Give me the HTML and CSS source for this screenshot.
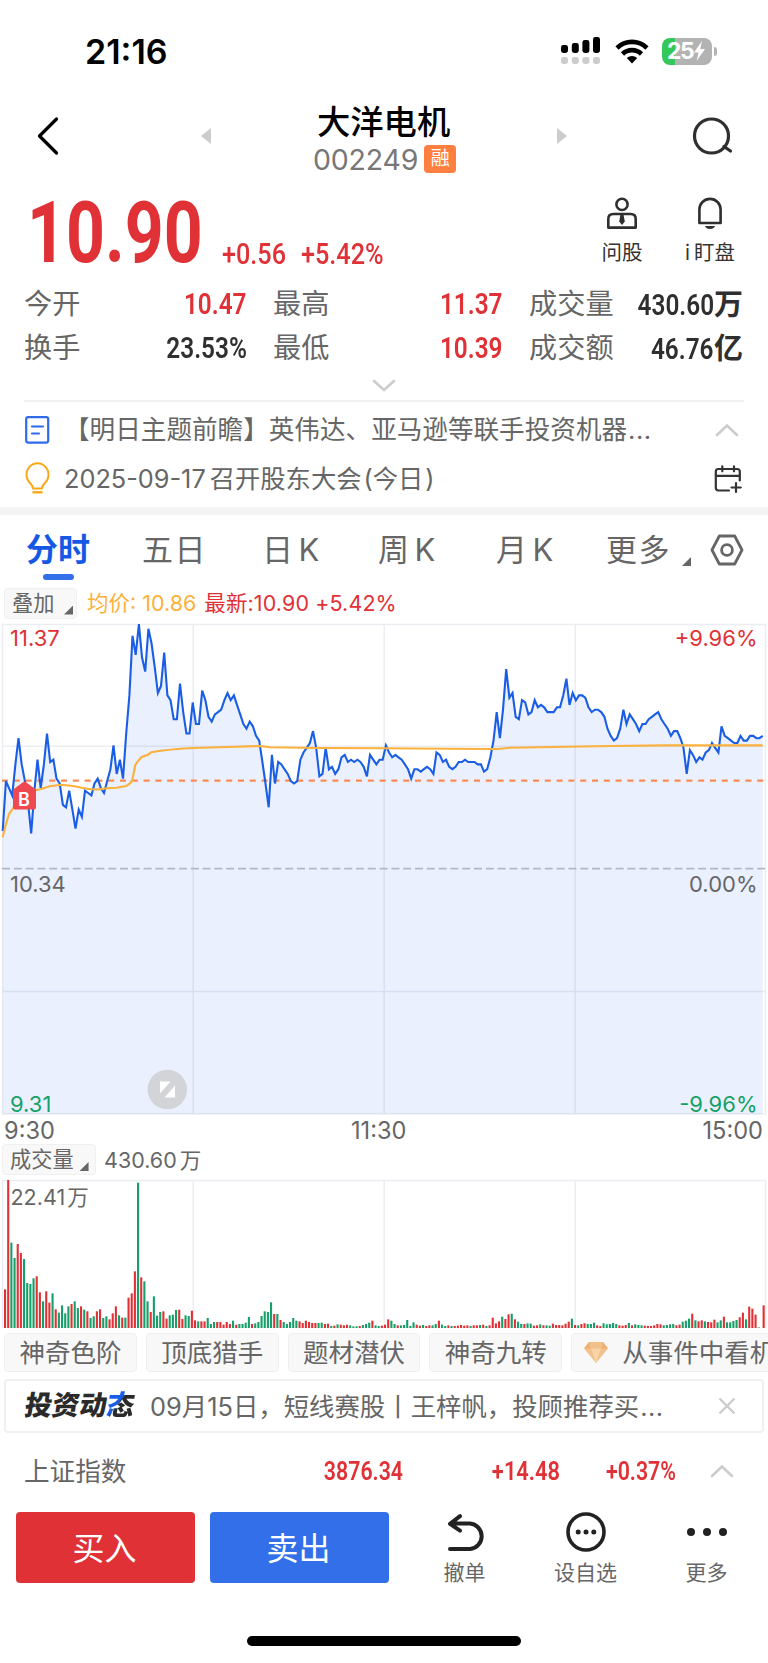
FILE: index.html
```html
<!DOCTYPE html>
<html lang="zh-CN">
  <head>
    <meta charset="UTF-8" />
    <meta name="viewport" content="width=device-width, initial-scale=1.0" />
    <title>大洋电机 002249</title>
    <link rel="stylesheet" href="styles.css">
  </head>
  <body>
    <div class="status-bar">
      <span class="status-time">21:16</span>
      <svg class="signal" width="40" height="28" viewBox="0 0 40 28">
        <g fill="#000">
          <rect x="0" y="8" width="7" height="8" rx="2.4" />
          <rect x="10.8" y="6" width="7" height="10" rx="2.4" />
          <rect x="21.4" y="3" width="7" height="13" rx="2.4" />
          <rect x="32" y="0" width="7" height="16" rx="2.4" />
        </g>
        <g fill="#ccc">
          <rect x="0" y="20" width="7" height="7" rx="2.4" />
          <rect x="10.8" y="20" width="7" height="7" rx="2.4" />
          <rect x="21.4" y="20" width="7" height="7" rx="2.4" />
          <rect x="32" y="20" width="7" height="7" rx="2.4" />
        </g>
      </svg>
      <svg class="wifi" width="34" height="25" viewBox="0 0 34 25">
        <g fill="none" stroke="#000" stroke-width="4.6">
          <path d="M2 9 A21.5 21.5 0 0 1 32 9" />
          <path d="M7.5 15 A13.6 13.6 0 0 1 26.5 15" />
        </g>
        <path d="M17 24.5 L11.8 19 A7.6 7.6 0 0 1 22.2 19 Z" />
      </svg>
      <div class="battery">
        <span>25</span>
        <svg width="11" height="20" viewBox="0 0 11 20"><path d="M8 0 L0 11.5 H4.6 L2.6 20 L11 8 H6.2 Z" fill="#fff" /></svg>
      </div>
    </div>

    <header class="header">
      <svg class="back" width="22" height="38" viewBox="0 0 22 38"><path d="M19.5 2 L2.5 19 L19.5 36" fill="none" stroke="#000" stroke-width="3.2" stroke-linecap="round" stroke-linejoin="round" /></svg>
      <svg class="prev" width="10" height="16" viewBox="0 0 10 16"><path d="M10 0 V16 L0 8 Z" fill="#ccc" /></svg>
      <div class="stock">
        <h1 class="stock-name">大洋电机</h1>
        <div class="stock-code">
          <span>002249</span>
          <span class="badge">融</span>
        </div>
      </div>
      <svg class="next" width="10" height="16" viewBox="0 0 10 16"><path d="M0 0 V16 L10 8 Z" fill="#ccc" /></svg>
      <svg class="search" width="42" height="38" viewBox="0 0 42 38"><g fill="none" stroke="#2f2f2f" stroke-width="3.2" stroke-linecap="round"><circle cx="19.5" cy="19" r="17" /><path d="M32 29.5 L38.5 34" /></g></svg>
    </header>

    <section class="quote">
      <span class="price din">10.90</span>
      <span class="change change-value din">+0.56</span>
      <span class="change din">+5.42%</span>
      <div class="tool tool-ask">
        <svg width="32" height="32" viewBox="0 0 32 32">
          <g fill="none" stroke="#2f2f2f" stroke-width="2.6">
            <circle cx="16" cy="7.4" r="5.6" />
            <path d="M2.3 30.6 V22 Q2.3 17 7.3 17 H24.7 Q29.7 17 29.7 22 V30.6 Z" stroke-linejoin="round" />
          </g>
          <path d="M14.4 18 H17.6 L18.8 24.5 L16 28 L13.2 24.5 Z" fill="#2f2f2f" />
        </svg>
        <span>问股</span>
      </div>
      <div class="tool tool-watch">
        <svg width="28" height="32" viewBox="0 0 28 32">
          <path d="M3.4 26 V12.5 A10.6 10.6 0 0 1 24.6 12.5 V26 Z" fill="none" stroke="#2f2f2f" stroke-width="2.6" stroke-linejoin="round" />
          <path d="M9 29 H19 Q18 32 14 32 Q10 32 9 29 Z" fill="#2f2f2f" />
        </svg>
        <span><i class="tool-i">i</i>盯盘</span>
      </div>
    </section>

    <section class="stats">
      <div class="stat"><span>今开</span><b class="din red">10.47</b></div>
      <div class="stat"><span>最高</span><b class="din red">11.37</b></div>
      <div class="stat"><span>成交量</span><b><i class="din">430.60</i>万</b></div>
      <div class="stat"><span>换手</span><b class="din">23.53%</b></div>
      <div class="stat"><span>最低</span><b class="din red">10.39</b></div>
      <div class="stat"><span>成交额</span><b><i class="din">46.76</i>亿</b></div>
    </section>
    <div class="expand">
      <svg width="24" height="14" viewBox="0 0 24 14"><path class="chevron" d="M2 2 L12 11 L22 2" /></svg>
    </div>

    <section class="news">
      <div class="news-row">
        <svg class="news-icon" width="25" height="28" viewBox="0 0 25 28"><g fill="none" stroke="#2f6be8" stroke-width="2.2"><rect x="1.2" y="1.2" width="22" height="25.4" rx="2" /><path d="M7 10.5 H18 M7 17.5 H14" stroke-linecap="round" /></g></svg>
        <p class="news-title">【明日主题前瞻】英伟达、亚马逊等联手投资机器<span class="dots">...</span></p>
        <svg width="24" height="14" viewBox="0 0 24 14"><path class="chevron" d="M2 12 L12 2.5 L22 12" /></svg>
      </div>
      <div class="news-row">
        <svg class="news-icon" width="25" height="30" viewBox="0 0 25 30"><g fill="none" stroke="#f9a816" stroke-width="2"><path d="M8 24.5 Q8 22 5.5 19.5 A11 11.4 0 1 1 19.5 19.5 Q17 22 17 24.5 Z" stroke-linejoin="round" /><path d="M7.5 28.3 H17.5" stroke-width="2.4" /></g></svg>
        <p class="notice"><span class="notice-date">2025-09-17</span>召开股东大会<span class="paren">(</span>今日<span class="paren">)</span></p>
        <svg class="calendar" width="28" height="28" viewBox="0 0 28 28"><g fill="none" stroke="#333" stroke-width="2.2" stroke-linecap="round"><path d="M15 25.5 H4.5 Q1.8 25.5 1.8 22.8 V6.5 Q1.8 4 4.5 4 H23 Q25.8 4 25.8 6.5 V15.5" /><path d="M2 10.8 H25.5 M8.3 1.3 V6.3 M20 1.3 V6.3 M22 18 V27 M17.5 22.5 H26.8" /></g></svg>
      </div>
    </section>

    <nav class="tabs">
      <span class="tab active">分时</span>
      <span class="tab">五日</span>
      <span class="tab tab-k">日K</span>
      <span class="tab tab-k">周K</span>
      <span class="tab tab-k tab-month">月K</span>
      <span class="tab tab-more">更多</span>
      <i class="corner"></i>
      <svg class="setting" width="34" height="32" viewBox="0 0 34 32"><g fill="none" stroke="#666" stroke-width="2.8" stroke-linejoin="round"><path d="M9.3 2 H24.7 L32 16 L24.7 30 H9.3 L2 16 Z" /><circle cx="17" cy="16" r="5.4" /></g></svg>
    </nav>

    <div class="chart-info">
      <span class="select">叠加<i class="corner"></i></span>
      <span class="avg">均价: 10.86</span>
      <span class="latest">最新:10.90 +5.42%</span>
    </div>

    <svg class="chart" width="768" height="491" viewBox="0 0 768 491">
      <path class="area" id="area" />
      <g class="grid">
        <path d="M2.5 0.5 H765.5 V490 H2.5 Z M193.2 0 V490 M384.2 0 V490 M575.2 0 V490 M2 122.2 H765 M2 367.5 H765" />
      </g>
      <path d="M2 244.6 H765" stroke="#b2b8c4" stroke-width="1.8" stroke-dasharray="8 3.8" />
      <path d="M2 156.6 H765" stroke="#fb8b55" stroke-width="2.2" stroke-dasharray="6 5.8" />
      <path class="line" id="line" />
      <path class="avg-line" d="M2.7 213.3 L5.7 201 L9 190 L12 186 L18.3 174.3 L28 167.7 L40.3 165.3 Q50 161.5 59.3 161 T81.7 163.7 T106.7 164.3 L116.7 163.7 L126 162 Q130.5 160 132.3 156 L135.3 141 L138.3 136.7 L141.7 133 L148 130.7 L151.3 128.3 Q165 125.6 193 124 L227 123 L260 122 L270 123.3 L317 124 L383 124.3 L450 124.7 L497 125 L510 123.8 L567 122.7 L610 122 L667 121.4 L762.7 121.4" />
      <path d="M24.5 159.5 L34 166.5 V183.5 H15 V166.5 Z" fill="#ee4850" stroke="#ee4850" stroke-width="4" stroke-linejoin="round" />
      <text class="mark" x="24" y="182">B</text>
      <g class="axis">
        <text class="up" x="10" y="22">11.37</text>
        <text class="up end" x="757.5" y="22">+9.96%</text>
        <text x="10" y="268">10.34</text>
        <text class="end" x="757.5" y="268">0.00%</text>
        <text class="down" x="10" y="487.5">9.31</text>
        <text class="down end" x="757.5" y="487.5">-9.96%</text>
      </g>
      <circle cx="167.3" cy="465.5" r="19.8" fill="#d3d4d7" />
      <path d="M160 457.5 H170.5 L160 469.5 Z M175 461.5 V473.5 H164.5 Z" fill="#fff" />
    </svg>
    <div class="times"><span>9:30</span><span>11:30</span><span>15:00</span></div>

    <div class="volume-info">
      <span class="select">成交量<i class="corner"></i></span>
      <span class="volume-value">430.60<em>万</em></span>
    </div>
    <svg class="volume" width="768" height="149" viewBox="0 0 768 149">
      <g class="grid"><path d="M2.5 148 V0.5 H765.5 V148 M193.2 0 V148 M384.2 0 V148 M575.2 0 V148" /></g>
      <g id="bars"></g>
      <text class="volume-max" x="10.5" y="24.5">22.41<tspan dx="2">万</tspan></text>
    </svg>

    <div class="chips">
      <span class="chip">神奇色阶</span>
      <span class="chip">顶底猎手</span>
      <span class="chip">题材潜伏</span>
      <span class="chip">神奇九转</span>
      <span class="chip chip-event">
        <svg width="24" height="21" viewBox="0 0 24 21"><path d="M5 0 H19 L24 6.5 L12 21 L0 6.5 Z" fill="#f3c08b" /><path d="M5 0 L7 6.5 H0 Z M19 0 L17 6.5 H24 Z" fill="#eeb074" /><path d="M7 6.5 H17 L12 21 Z" fill="#f8d3a8" /></svg>
        从事件中看机会
      </span>
    </div>

    <div class="feed">
      <span class="feed-logo">投资动<em>态</em></span>
      <span class="feed-text">09月15日，短线赛股丨王梓帆，投顾推荐买<span class="dots">...</span></span>
      <svg width="18" height="18" viewBox="0 0 18 18"><path d="M1.5 1.5 L16.5 16.5 M16.5 1.5 L1.5 16.5" stroke="#ccc" stroke-width="2.4" /></svg>
    </div>

    <div class="index">
      <span class="index-name">上证指数</span>
      <b class="din index-value">3876.34</b>
      <b class="din index-change">+14.48</b>
      <b class="din index-percent">+0.37%</b>
      <svg width="24" height="14" viewBox="0 0 24 14"><path class="chevron" d="M2 12 L12 2.5 L22 12" /></svg>
    </div>

    <footer class="actions">
      <button type="button" class="btn buy">买入</button>
      <button type="button" class="btn sell">卖出</button>
      <div class="action">
        <svg width="40" height="40" viewBox="0 0 40 40"><path d="M15 4.2 L5 11.8 L15 18.6 M5.5 11.5 H25 A12.8 12.8 0 0 1 25 37 H5" fill="none" stroke="#222" stroke-width="4" stroke-linecap="round" stroke-linejoin="round" /></svg>
        <span>撤单</span>
      </div>
      <div class="action">
        <svg width="40" height="40" viewBox="0 0 40 40"><circle cx="20" cy="20" r="18" fill="none" stroke="#222" stroke-width="3.6" /><g fill="#222"><circle cx="12.2" cy="20" r="2.5" /><circle cx="20" cy="20" r="2.5" /><circle cx="27.8" cy="20" r="2.5" /></g></svg>
        <span>设自选</span>
      </div>
      <div class="action">
        <svg width="40" height="40" viewBox="0 0 40 40"><g fill="#222"><circle cx="4" cy="20" r="4" /><circle cx="20" cy="20" r="4" /><circle cx="36" cy="20" r="4" /></g></svg>
        <span>更多</span>
      </div>
    </footer>
    <div class="home-bar"></div>

    <script src="chart.js"></script>
  </body>
</html>
```

FILE: styles.css
```css
* {
  box-sizing: border-box;
}
body {
  width: 768px;
  height: 1663px;
  margin: 0;
  overflow: hidden;
  background-color: #fff;
  color: #666;
  font-family: Inter, "Noto Sans CJK SC", sans-serif;
}
svg {
  display: block;
  flex-shrink: 0;
  overflow: visible;
}
span,
b {
  white-space: nowrap;
}
i,
em {
  font-style: normal;
}
/* 数字用窄体 */
.din {
  display: inline-block;
  font-family: Roboto, sans-serif;
  font-weight: 600;
  transform: scaleX(0.84);
  transform-origin: right center;
}
.red {
  color: #e03136;
}
.chevron {
  fill: none;
  stroke: #ccc;
  stroke-width: 2.6;
  stroke-linecap: round;
}
.corner {
  width: 9px;
  height: 9px;
  background-color: #666;
  clip-path: polygon(100% 0, 100% 100%, 0 100%);
}

.status-bar {
  display: flex;
  align-items: center;
  height: 102px;
  padding-left: 85px;
}
.status-time {
  width: 476px;
  color: #000;
  font-size: 34px;
  font-weight: 600;
  letter-spacing: 0;
}
.wifi {
  margin-left: 14px;
}
.battery {
  position: relative;
  display: flex;
  align-items: center;
  gap: 1px;
  width: 50px;
  height: 27px;
  margin-left: 13px;
  padding-left: 5px;
  border-radius: 8px;
  background: linear-gradient(90deg, #34c759 26%, #b3b3b3 26%);
  color: #fff;
  font-size: 23px;
  font-weight: 700;
  letter-spacing: -1.4px;
}
.battery::after {
  content: "";
  position: absolute;
  left: 52px;
  top: 9px;
  width: 3px;
  height: 9px;
  border-radius: 0 3px 3px 0;
  background-color: #b3b3b3;
}

.header {
  display: flex;
  align-items: center;
  height: 88px;
  padding: 0 34px 20px 37px;
}
.prev {
  margin-left: 142px;
}
.stock {
  width: 144px;
  height: 70px;
  margin-left: 102px;
}
.stock-name {
  margin: 0;
  padding-left: 4px;
  color: #000;
  font-size: 33.3px;
  font-weight: 500;
  line-height: 42px;
}
.stock-code {
  display: flex;
  align-items: center;
  gap: 6px;
  height: 28px;
  margin-top: 2px;
  font-size: 28.5px;
  color: #777;
  letter-spacing: -0.2px;
}
.badge {
  width: 32px;
  height: 28px;
  border-radius: 4px;
  background-color: #ff7f40;
  color: #fff;
  font-size: 19px;
  line-height: 27px;
  text-align: center;
}
.next {
  margin-left: 100px;
}
.search {
  margin-left: auto;
}

.quote {
  display: flex;
  height: 92px;
}
.price {
  flex-shrink: 0;
  width: 222px;
  padding-left: 27px;
  color: #e03136;
  font-size: 86px;
  line-height: 86px;
}
.quote .price {
  font-weight: 700;
  transform: scaleX(0.79);
  transform-origin: 27px center;
}
.change {
  width: 79px;
  padding-top: 47px;
  color: #e03136;
  font-size: 29px;
  line-height: 34px;
}
.quote .change {
  font-weight: 500;
  transform: scaleX(0.87);
  transform-origin: left center;
}
.tool {
  display: flex;
  flex-direction: column;
  align-items: center;
  width: 80px;
  padding-top: 7px;
  color: #333;
  font-size: 20.5px;
  line-height: 24px;
}
.tool span {
  margin-top: 12px;
}
.tool-ask {
  margin-left: auto;
}
.tool-watch {
  width: 96px;
  margin-right: 10px;
}
.tool-i {
  margin-right: 4px;
}

.stats {
  display: grid;
  grid-template-columns: 223px 230px 214px;
  column-gap: 26px;
  height: 88px;
  padding-left: 24px;
}
.stat {
  display: flex;
  justify-content: space-between;
  height: 44px;
  font-size: 28.2px;
  line-height: 45px;
}
.stat b {
  color: #2f2f2f;
  font-size: 29px;
  font-weight: 600;
}
.stat b.red {
  color: #e03136;
}
.expand {
  display: flex;
  justify-content: center;
  height: 32px;
  margin: 0 24px;
  padding-top: 9px;
  border-bottom: 2px solid #f1f1f1;
}

.news {
  height: 113px;
  padding: 3px 29px 0 25px;
  border-bottom: 8px solid #f4f4f4;
}
.news-row {
  display: flex;
  align-items: center;
  justify-content: space-between;
  height: 49px;
}
.news-title,
.notice {
  flex: 1;
  margin: 0 0 0 14px;
  font-size: 25.6px;
  line-height: 36px;
}
.notice {
  font-size: 25.3px;
}
.dots {
  margin-left: 1px;
  letter-spacing: 0.5px;
}
.notice-date {
  margin-right: 4px;
}
.paren {
  margin: 0 0 0 2px;
}
.calendar {
  margin-right: -3px;
}

.tabs {
  display: flex;
  height: 69px;
  padding: 12px 24px 0 26px;
  font-size: 31px;
  line-height: 46px;
}
.tab {
  width: 116px;
  letter-spacing: 1.6px;
}
.tab-k {
  padding-left: 4px;
  letter-spacing: 5.5px;
}
.tab-month {
  padding-left: 6px;
}
.tab.active {
  position: relative;
  color: #1658e6;
  font-weight: 600;
  font-size: 32px;
  letter-spacing: 0;
}
.tab.active::after {
  content: "";
  position: absolute;
  left: 17px;
  top: 47px;
  width: 31px;
  height: 6px;
  border-radius: 3px;
  background-color: #326fe8;
}
.tab-more {
  width: 66px;
}
.tabs .corner {
  margin: 30px 0 0 auto;
}
.setting {
  margin: 7px 0 0 19px;
}

.chart-info,
.volume-info {
  display: flex;
  align-items: center;
  height: 40px;
  padding-left: 4px;
  font-size: 21.5px;
}
.chart-info {
  padding-bottom: 2px;
}
.select {
  display: flex;
  align-items: flex-end;
  height: 31px;
  padding: 0 3px 3px 7px;
  border: 1px solid #f0f0f0;
  border-radius: 4px;
  background-color: #f8f8f8;
  font-size: 21.2px;
  line-height: 24px;
}
.chart-info .select {
  width: 73px;
  justify-content: space-between;
}
.avg,
.latest {
  padding-bottom: 4px;
}
.avg {
  margin-left: 10px;
  color: #fbb13c;
}
.latest {
  margin-left: 8px;
  color: #e03136;
  letter-spacing: 0.1px;
}

.grid path {
  fill: none;
  stroke: rgba(60, 80, 120, 0.1);
  stroke-width: 1.5;
}
.area {
  fill: #eaf0fe;
}
.line {
  fill: none;
  stroke: #1b5ee6;
  stroke-width: 2.1;
}
.avg-line {
  fill: none;
  stroke: #fbb13c;
  stroke-width: 2.1;
}
.mark {
  fill: #fff;
  font-size: 18px;
  font-weight: 600;
  text-anchor: middle;
}
.axis {
  fill: #666;
  font-size: 22px;
}
.axis .up {
  fill: #e03136;
}
.axis .down {
  fill: #16a069;
}
.axis .end {
  text-anchor: end;
}
.times {
  display: flex;
  justify-content: space-between;
  height: 29px;
  padding: 0 5px 0 4px;
  font-size: 23.6px;
  line-height: 31px;
}

.volume-info {
  height: 36px;
  padding: 0 0 5px 2px;
}
.volume-info .select {
  gap: 6px;
  width: 94px;
}
.volume-value {
  margin-left: 8px;
  padding-bottom: 2px;
}
.volume-value em {
  margin-left: 3px;
}
.volume-max {
  fill: #666;
  font-size: 21.5px;
}
.bar-r {
  fill: #e03136;
}
.bar-g {
  fill: #16a069;
}

.chips {
  display: flex;
  gap: 9px;
  height: 39px;
  margin: 4px 0 7px 4px;
  overflow: hidden;
}
.chip {
  flex-shrink: 0;
  width: 132.8px;
  border: 1px solid #efefef;
  border-radius: 4px;
  background-color: #f8f8f8;
  font-size: 25.5px;
  line-height: 38px;
  text-align: center;
}
.chip-event {
  display: flex;
  align-items: center;
  gap: 14px;
  width: 240px;
  padding-left: 12px;
}

.feed {
  display: flex;
  align-items: center;
  width: 760px;
  height: 54px;
  margin-left: 4px;
  padding: 0 26px 0 19px;
  border: 2px solid #f0f0f0;
  border-radius: 4px;
  font-size: 25.4px;
}
.feed-logo {
  width: 125px;
  color: #2a2a2a;
  font-size: 27.3px;
  font-weight: 900;
  line-height: 40px;
  transform: skewX(-9deg);
}
.feed-logo em {
  background: linear-gradient(120deg, #1b5ee6 42%, #2a2a2a 42%);
  background-clip: text;
  -webkit-background-clip: text;
  color: transparent;
}
.feed-text {
  flex: 1;
  padding-bottom: 2px;
}

.index {
  display: flex;
  align-items: center;
  height: 79px;
  padding: 0 34px 3px 24px;
  font-size: 25.6px;
}
.index b {
  color: #e03136;
  font-size: 26px;
  text-align: right;
}
.index .index-value {
  transform: scaleX(0.82);
}
.index .index-percent {
  transform: scaleX(0.82);
}
.index-name {
  width: 110px;
  padding-bottom: 4px;
}
.index-value {
  width: 269px;
}
.index-change {
  width: 157px;
}
.index-percent {
  width: 116px;
}
.index svg {
  margin-left: auto;
}

.actions {
  display: flex;
  height: 124px;
  padding-left: 16px;
}
.btn {
  width: 179px;
  height: 71px;
  margin-right: 15px;
  padding: 0 2px 4px 0;
  border: 0;
  border-radius: 4px;
  color: #fff;
  font-family: inherit;
  font-size: 32px;
}
.buy {
  background-color: #e03136;
}
.sell {
  background-color: #326fe8;
}
.action {
  display: flex;
  flex-direction: column;
  align-items: center;
  width: 121px;
  font-size: 21px;
  line-height: 24px;
}
.action span {
  margin-top: 9px;
}
.home-bar {
  width: 274px;
  height: 10px;
  margin-left: 247px;
  border-radius: 5px;
  background-color: #000;
}
```

FILE: chart.js
```js
// 每分钟价格（分）
const prices = [
  1050, 1071, 1068, 1065, 1078, 1089, 1078, 1071, 1062, 1049, 1067, 1080, 1068, 1078, 1091, 1079,
  1080, 1072, 1070, 1061, 1060, 1067, 1059, 1051, 1059, 1056, 1067, 1066, 1065, 1070, 1072, 1068,
  1066, 1071, 1076, 1086, 1074, 1080, 1072, 1091, 1107, 1132, 1124, 1137, 1123, 1117, 1135, 1129,
  1119, 1108, 1111, 1125, 1107, 1105, 1097, 1097, 1112, 1100, 1091, 1091, 1104, 1095, 1095, 1109,
  1105, 1098, 1096, 1099, 1100, 1101, 1105, 1108, 1105, 1107, 1103, 1099, 1095, 1093, 1096, 1094,
  1090, 1088, 1079, 1070, 1060, 1082, 1070, 1079, 1078, 1076, 1074, 1071, 1070, 1071, 1080, 1083,
  1085, 1087, 1092, 1085, 1073, 1074, 1085, 1076, 1077, 1074, 1076, 1081, 1082, 1079, 1080, 1079,
  1080, 1079, 1077, 1073, 1082, 1080, 1078, 1080, 1080, 1086, 1083, 1081, 1082, 1081, 1080, 1078,
  1076, 1072, 1076, 1076, 1075, 1076, 1077, 1076, 1074, 1083, 1082, 1079, 1080, 1077, 1076, 1077,
  1079, 1079, 1080, 1079, 1079, 1079, 1078, 1078, 1075, 1076, 1081, 1088, 1100, 1089, 1101, 1118,
  1106, 1108, 1098, 1097, 1105, 1104, 1099, 1100, 1105, 1102, 1103, 1102, 1100, 1100, 1100, 1102,
  1102, 1107, 1114, 1103, 1108, 1105, 1107, 1107, 1106, 1102, 1100, 1101, 1101, 1100, 1098, 1093,
  1090, 1088, 1089, 1093, 1101, 1095, 1099, 1097, 1095, 1092, 1095, 1095, 1097, 1098, 1099, 1100,
  1097, 1095, 1093, 1090, 1092, 1092, 1089, 1085, 1074, 1084, 1082, 1079, 1081, 1080, 1083, 1084,
  1087, 1085, 1083, 1094, 1090, 1089, 1088, 1087, 1087, 1090, 1088, 1088, 1090, 1090, 1089, 1089,
  1090,
];
const STEP = 3.1667;

let points = prices.map((price, i) => {
  let x = 2.7 + i * STEP;
  let y = (1137 - price) * 2.38;
  return x.toFixed(1) + " " + y.toFixed(1);
});
document.querySelector("#line").setAttribute("d", "M" + points.join(" L"));
document.querySelector("#area").setAttribute("d", "M" + points.join(" L") + " V490 H2.7 Z");

// 成交量：r 红 g 绿
const volumes = `r116 r444 g256 g210 r252 r225 g207 g135 g132 g149 r155 r107 g80 r110 r76 g104 r56 g46 g68 g44
g65 r72 g80 g60 r65 g55 r50 g30 g35 r50 r56 g30 g35 r26 r44 r65 g38 r31 g31 r91
r104 r170 g436 r152 g140 g80 r48 g95 g37 g48 r50 r28 g38 g40 g54 r55 r27 g38 g36 r52
r23 g20 r20 r20 g30 g12 g18 r18 r18 r10 r18 r12 g22 r10 g12 g12 g16 g33 r12 g14
g18 g36 g50 g48 g77 r42 g42 r24 g18 g12 g18 g30 g22 r20 r15 r22 r18 r15 r15 g15
g16 r12 r13 g6 r7 g11 r10 r8 r10 g8 g5 g5 r6 g9 g12 g16 r22 g8 g6 r7
r10 r26 g22 g12 r8 g8 g9 g24 g6 g17 r10 r7 g9 r6 r8 g8 g12 r22 g10 g6
r8 g6 r6 r7 r9 r7 r8 g6 r8 r8 g9 r10 g6 r8 r31 r14 r20 g34 r27 r41
g43 r26 g19 g12 r12 g14 g13 r7 r8 g11 r8 g8 g7 r13 r9 r9 r8 r13 r19 g28
r9 g8 r12 r14 g12 g12 g16 r8 r6 g14 g11 g12 g15 g12 r8 r7 r9 g15 r8 g11
g9 g8 r7 r6 r6 r8 r12 r11 g8 g9 g11 g12 r8 r10 g19 g22 g28 r43 g23 r20
r23 g20 r18 r17 r25 g17 g23 r34 g17 g17 g21 g24 r32 r46 g26 r64 r58 r40 g2 r0
r68`.split(/\s+/);
const bars = document.querySelector("#bars");

volumes.forEach((item, i) => {
  let height = Number(item.slice(1)) / 3;
  let bar = document.createElementNS("http://www.w3.org/2000/svg", "rect");
  bar.setAttribute("class", "bar-" + item[0]);
  bar.setAttribute("x", Math.min(4 + i * STEP, 762.6).toFixed(2));
  bar.setAttribute("y", 148 - height);
  bar.setAttribute("width", 2.1);
  bar.setAttribute("height", height);
  bars.appendChild(bar);
});
```
